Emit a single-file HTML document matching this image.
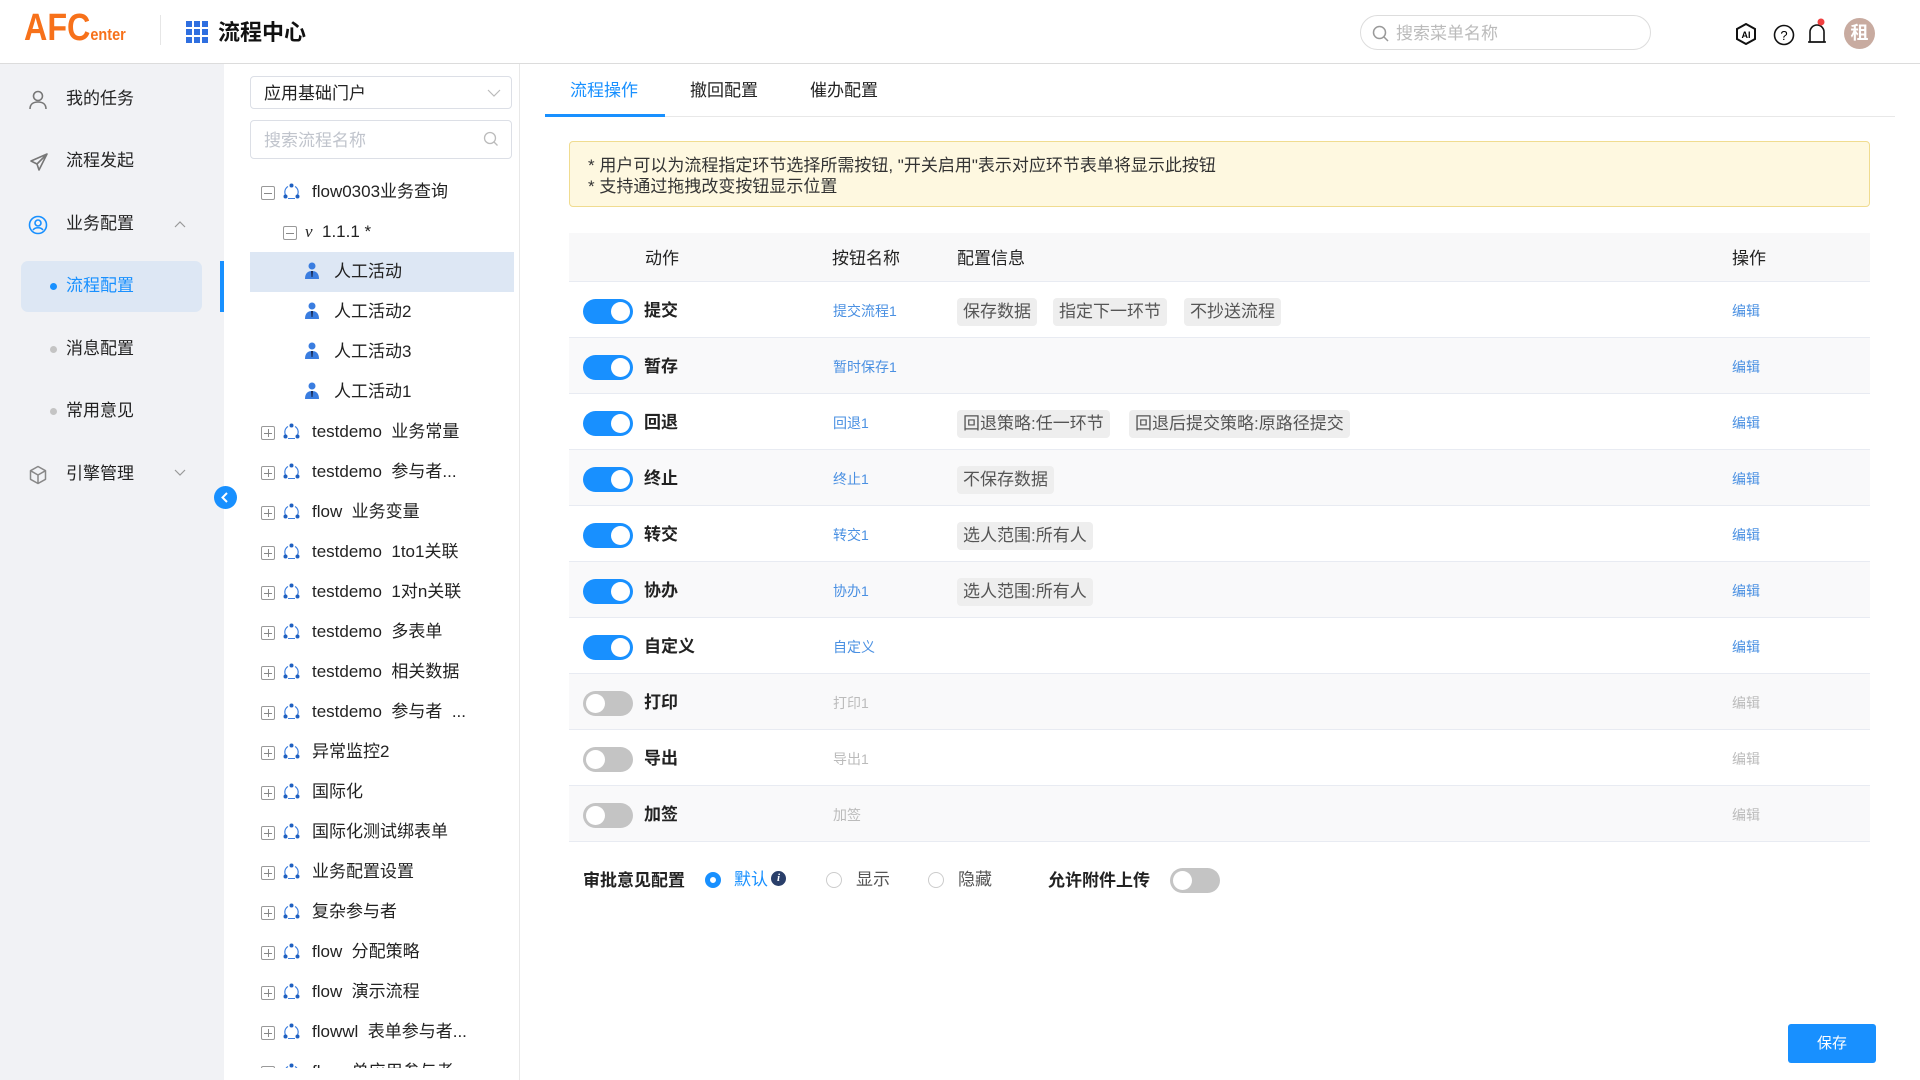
<!DOCTYPE html>
<html><head><meta charset="utf-8"><style>
*{margin:0;padding:0;box-sizing:border-box}
body{width:1920px;height:1080px;overflow:hidden;background:#fff;font-family:"Liberation Sans","Noto Sans CJK SC",sans-serif;color:#222;position:relative}
.a{position:absolute}
.hdr{left:0;top:0;width:1920px;height:64px;border-bottom:1px solid #dcdcdc;background:#fff}
.side{left:0;top:64px;width:224px;height:1016px;background:#f1f2f5}
.tree{left:224px;top:64px;width:296px;height:1016px;border-right:1px solid #e8e8e8;background:#fff}
.mi{position:absolute;left:66px;font-size:17px;color:#222;line-height:24px}
.ti{position:absolute;font-size:17px;line-height:24px;white-space:nowrap;color:#222}
.box{position:absolute;width:14px;height:14px;border:1px solid #999;border-radius:2px}
.box:before{content:"";position:absolute;left:2px;right:2px;top:5.5px;height:1px;background:#888}
.box.p:after{content:"";position:absolute;top:2px;bottom:2px;left:5.5px;width:1px;background:#888}
.row{position:absolute;left:569px;width:1301px;height:56px;border-bottom:1px solid #e8ebf2}
.tg{position:absolute;left:14px;top:17px;width:50px;height:25px;border-radius:13px;background:#1890ff}
.tg:after{content:"";position:absolute;right:3px;top:3px;width:19px;height:19px;border-radius:50%;background:#fff}
.tg.off{background:#c4c4c4}.tg.off:after{right:auto;left:3px}
.act{position:absolute;left:75px;top:17px;font-size:17px;font-weight:bold;line-height:24px}
.bn{position:absolute;left:264px;top:19px;font-size:14px;color:#4a90e2;line-height:20px}
.off2 .bn,.off2 .op{color:#bbb}
.op{position:absolute;left:1163px;top:19px;font-size:14px;color:#4a90e2;line-height:20px}
.tag{position:absolute;top:16px;height:28px;line-height:28px;padding:0 6px;background:#eeeeee;border-radius:4px;font-size:17px;color:#555}
</style></head><body>
<div class="a hdr">
 <div class="a" style="left:24px;top:8px;font-size:38px;font-weight:bold;color:#f7711a;line-height:40px;transform:scaleX(0.85);transform-origin:left">AFC<span style="font-size:17px">enter</span></div>
 <div class="a" style="left:160px;top:15px;width:1px;height:30px;background:#e6e6e6"></div>
 <svg class="a" style="left:186px;top:21px" width="23" height="23"><g fill="#2f6fe0"><rect x="0" y="0" width="6" height="6"/><rect x="8" y="0" width="6" height="6"/><rect x="16" y="0" width="6" height="6"/><rect x="0" y="8" width="6" height="6"/><rect x="8" y="8" width="6" height="6"/><rect x="16" y="8" width="6" height="6"/><rect x="0" y="16" width="6" height="6"/><rect x="8" y="16" width="6" height="6"/><rect x="16" y="16" width="6" height="6"/></g></svg>
 <div class="a" style="left:218px;top:19px;font-size:22px;font-weight:bold;color:#111;line-height:28px">流程中心</div>
 <div class="a" style="left:1360px;top:15px;width:291px;height:35px;border:1px solid #ddd;border-radius:18px">
  <svg class="a" style="left:11px;top:9px" width="17" height="17"><circle cx="7.5" cy="7.5" r="6" fill="none" stroke="#999" stroke-width="1.5"/><path d="M12 12l4 4" stroke="#999" stroke-width="1.5"/></svg>
  <div class="a" style="left:35px;top:6px;font-size:17px;color:#bbb;line-height:24px">搜索菜单名称</div>
 </div>
 <svg class="a" style="left:1735px;top:23px" width="22" height="22"><path d="M11 1l9 5v10l-9 5-9-5V6z" fill="none" stroke="#111" stroke-width="2"/><text x="11" y="15" font-size="9" font-weight="bold" text-anchor="middle" font-family="Liberation Sans">AI</text></svg>
 <svg class="a" style="left:1773px;top:24px" width="22" height="22"><circle cx="11" cy="11" r="9.5" fill="none" stroke="#111" stroke-width="1.6"/><text x="11" y="16" font-size="13" text-anchor="middle" font-family="Liberation Sans">?</text></svg>
 <svg class="a" style="left:1806px;top:18px" width="22" height="30"><path d="M4 24V14a7 7 0 0 1 14 0v10z" fill="none" stroke="#111" stroke-width="1.6"/><path d="M2 24h18" stroke="#111" stroke-width="1.6"/><circle cx="15" cy="4" r="3.5" fill="#f04040"/></svg>
 <div class="a" style="left:1844px;top:18px;width:31px;height:31px;border-radius:50%;background:#c8aba0;color:#fff;font-weight:bold;font-size:18px;text-align:center;line-height:31px">租</div>
</div>

<div class="a side">
 <svg class="a" style="left:29px;top:26px" width="18" height="20"><circle cx="9" cy="6" r="4.5" fill="none" stroke="#777" stroke-width="1.6"/><path d="M1 19c0-5 3.5-7 8-7s8 2 8 7" fill="none" stroke="#777" stroke-width="1.6"/></svg>
 <div class="mi" style="top:23px">我的任务</div>
 <svg class="a" style="left:29px;top:88px" width="20" height="20"><path d="M18 2L2 9l6 3 2 6 8-16z M8 12l10-10" fill="none" stroke="#777" stroke-width="1.6" stroke-linejoin="round"/></svg>
 <div class="mi" style="top:85px">流程发起</div>
 <svg class="a" style="left:28px;top:151px" width="20" height="20"><circle cx="10" cy="10" r="8.5" fill="none" stroke="#1890ff" stroke-width="1.6"/><circle cx="10" cy="8" r="3" fill="none" stroke="#1890ff" stroke-width="1.6"/><path d="M5 15c2-3 8-3 10 0" fill="none" stroke="#1890ff" stroke-width="1.6"/></svg>
 <div class="mi" style="top:148px">业务配置</div>
 <svg class="a" style="left:174px;top:156px" width="12" height="8"><path d="M1 7l5-5 5 5" fill="none" stroke="#999" stroke-width="1.2"/></svg>
 <div class="a" style="left:21px;top:197px;width:181px;height:51px;background:#dde7f4;border-radius:7px"></div>
 <div class="a" style="left:220px;top:197px;width:4px;height:51px;background:#1890ff"></div>
 <div class="a" style="left:50px;top:219px;width:7px;height:7px;border-radius:50%;background:#1890ff"></div>
 <div class="mi" style="top:210px;color:#1890ff">流程配置</div>
 <div class="a" style="left:50px;top:282px;width:7px;height:7px;border-radius:50%;background:#c4c4c4"></div>
 <div class="mi" style="top:273px">消息配置</div>
 <div class="a" style="left:50px;top:344px;width:7px;height:7px;border-radius:50%;background:#c4c4c4"></div>
 <div class="mi" style="top:335px">常用意见</div>
 <svg class="a" style="left:28px;top:401px" width="20" height="20"><path d="M10 1.5l7.5 4.2v8.6L10 18.5 2.5 14.3V5.7z M2.5 5.7L10 10l7.5-4.3 M10 10v8.5" fill="none" stroke="#888" stroke-width="1.5" stroke-linejoin="round"/></svg>
 <div class="mi" style="top:398px">引擎管理</div>
 <svg class="a" style="left:174px;top:405px" width="12" height="8"><path d="M1 1l5 5 5-5" fill="none" stroke="#999" stroke-width="1.2"/></svg>
</div>

<div class="a tree">
 <div class="a" style="left:26px;top:12px;width:262px;height:33px;border:1px solid #dcdfe6;border-radius:4px">
  <div class="a" style="left:13px;top:5px;font-size:17px;line-height:24px">应用基础门户</div>
  <svg class="a" style="left:236px;top:12px" width="14" height="8"><path d="M1 1l6 6 6-6" fill="none" stroke="#bbb" stroke-width="1.2"/></svg>
 </div>
 <div class="a" style="left:26px;top:56px;width:262px;height:39px;border:1px solid #dcdfe6;border-radius:4px">
  <div class="a" style="left:13px;top:8px;font-size:17px;color:#c0c4cc;line-height:24px">搜索流程名称</div>
  <svg class="a" style="left:232px;top:10px" width="16" height="16"><circle cx="7" cy="7" r="5.5" fill="none" stroke="#bbb" stroke-width="1.3"/><path d="M11 11l3.5 3.5" stroke="#bbb" stroke-width="1.3"/></svg>
 </div>
 <div class="a" style="left:26px;top:188px;width:264px;height:40px;background:#dde7f4"></div>
</div>
<div id="tr"></div>
<div class="a" style="left:214px;top:486px;width:23px;height:23px;border-radius:50%;background:#1890ff"><svg width="23" height="23"><path d="M13 7l-4.5 4.5L13 16" fill="none" stroke="#fff" stroke-width="2"/></svg></div>

<div class="a" style="left:545px;top:116px;width:1350px;height:1px;background:#e8e8e8"></div>
<div class="a" style="left:545px;top:114px;width:120px;height:3px;background:#1890ff"></div>
<div class="a" style="left:570px;top:79px;font-size:17px;color:#1890ff;line-height:24px">流程操作</div>
<div class="a" style="left:690px;top:79px;font-size:17px;line-height:24px">撤回配置</div>
<div class="a" style="left:810px;top:79px;font-size:17px;line-height:24px">催办配置</div>

<div class="a" style="left:569px;top:141px;width:1301px;height:66px;background:#fef8e0;border:1px solid #f0dc90;border-radius:4px;font-size:17px;line-height:21px;padding:13px 0 0 18px;color:#333">* 用户可以为流程指定环节选择所需按钮, "开关启用"表示对应环节表单将显示此按钮<br>* 支持通过拖拽改变按钮显示位置</div>

<div class="a" style="left:569px;top:233px;width:1301px;height:49px;background:#f8f8f9;border-bottom:1px solid #e8ebf2;font-size:17px;line-height:51px">
 <span class="a" style="left:76px">动作</span><span class="a" style="left:263px">按钮名称</span><span class="a" style="left:388px">配置信息</span><span class="a" style="left:1163px">操作</span>
</div>
<div id="rows"></div>

<div class="a" style="left:583px;top:869px;font-size:17px;font-weight:bold;line-height:24px">审批意见配置</div>
<div class="a" style="left:705px;top:872px;width:16px;height:16px;border-radius:50%;border:5px solid #1890ff;background:#fff"></div>
<div class="a" style="left:734px;top:868px;font-size:17px;color:#1890ff;line-height:24px">默认</div>
<div class="a" style="left:771px;top:871px;width:15px;height:15px;border-radius:50%;background:#2a3f6a;color:#fff;font-size:11px;font-style:italic;font-weight:bold;text-align:center;line-height:15px;font-family:'Liberation Serif',serif">i</div>
<div class="a" style="left:826px;top:872px;width:16px;height:16px;border-radius:50%;border:1px solid #ccc"></div>
<div class="a" style="left:856px;top:868px;font-size:17px;color:#555;line-height:24px">显示</div>
<div class="a" style="left:928px;top:872px;width:16px;height:16px;border-radius:50%;border:1px solid #ccc"></div>
<div class="a" style="left:958px;top:868px;font-size:17px;color:#555;line-height:24px">隐藏</div>
<div class="a" style="left:1048px;top:869px;font-size:17px;font-weight:bold;line-height:24px">允许附件上传</div>
<div class="a tg off" style="left:1170px;top:868px"></div>

<div class="a" style="left:1788px;top:1024px;width:88px;height:39px;background:#1890ff;border-radius:3px;color:#fff;font-size:15px;text-align:center;line-height:39px">保存</div>

<script>
var flow='<svg width="17" height="17" viewBox="0 0 17 17"><path d="M5 3.5A6.5 6.5 0 0 0 2.5 12 M14.5 12A6.5 6.5 0 0 0 12 3.5 M5 15.5h7" fill="none" stroke="#3a7de0" stroke-width="1.1"/><circle cx="8.5" cy="2.5" r="2" fill="#1e5fc0"/><circle cx="2.5" cy="13.5" r="2" fill="#1e5fc0"/><circle cx="14.5" cy="13.5" r="2" fill="#1e5fc0"/></svg>';
var person='<svg width="16" height="17" viewBox="0 0 16 17"><circle cx="8" cy="4" r="3.5" fill="#3a7de0"/><path d="M1 17c0-6 3-8 7-8s7 2 7 8z" fill="#3a7de0"/><path d="M7 9h2l-.5 6h-1z" fill="#1a2a50"/></svg>';
var items=[[0,'m',1,'flow0303业务查询'],[1,'m',0,'<i style="font-family:Liberation Serif">v</i>&nbsp; 1.1.1 *'],[2,'',2,'人工活动'],[2,'',2,'人工活动2'],[2,'',2,'人工活动3'],[2,'',2,'人工活动1'],
[0,'p',1,'testdemo&nbsp; 业务常量'],[0,'p',1,'testdemo&nbsp; 参与者...'],[0,'p',1,'flow&nbsp; 业务变量'],[0,'p',1,'testdemo&nbsp; 1to1关联'],[0,'p',1,'testdemo&nbsp; 1对n关联'],[0,'p',1,'testdemo&nbsp; 多表单'],[0,'p',1,'testdemo&nbsp; 相关数据'],[0,'p',1,'testdemo&nbsp; 参与者&nbsp; ...'],[0,'p',1,'异常监控2'],[0,'p',1,'国际化'],[0,'p',1,'国际化测试绑表单'],[0,'p',1,'业务配置设置'],[0,'p',1,'复杂参与者'],[0,'p',1,'flow&nbsp; 分配策略'],[0,'p',1,'flow&nbsp; 演示流程'],[0,'p',1,'flowwl&nbsp; 表单参与者...'],[0,'p',1,'flow&nbsp; 单应用参与者']];
var h='';items.forEach(function(it,i){var y=192+i*40;
if(it[0]==0){h+='<div class="box '+it[1]+'" style="left:261px;top:'+(y-6)+'px"></div><div class="a" style="left:283px;top:'+(y-9)+'px">'+flow+'</div><div class="ti" style="left:312px;top:'+(y-12)+'px">'+it[3]+'</div>';}
else if(it[0]==1){h+='<div class="box m" style="left:283px;top:'+(y-6)+'px"></div><div class="ti" style="left:305px;top:'+(y-12)+'px">'+it[3]+'</div>';}
else{h+='<div class="a" style="left:304px;top:'+(y-10)+'px">'+person+'</div><div class="ti" style="left:334px;top:'+(y-12)+'px">'+it[3]+'</div>';}});
document.getElementById('tr').innerHTML='<div style="position:absolute;left:0;top:0;width:520px;height:1068px;overflow:hidden">'+h+'</div>';
var rows=[[1,'提交','提交流程1',[['保存数据',388],['指定下一环节',484],['不抄送流程',615]]],[1,'暂存','暂时保存1',[]],[1,'回退','回退1',[['回退策略:任一环节',388],['回退后提交策略:原路径提交',560]]],[1,'终止','终止1',[['不保存数据',388]]],[1,'转交','转交1',[['选人范围:所有人',388]]],[1,'协办','协办1',[['选人范围:所有人',388]]],[1,'自定义','自定义',[]],[0,'打印','打印1',[]],[0,'导出','导出1',[]],[0,'加签','加签',[]]];
var r='';rows.forEach(function(x,i){var t='';x[3].forEach(function(g){t+='<div class="tag" style="left:'+g[1]+'px">'+g[0]+'</div>'});
r+='<div class="row'+(x[0]?'':' off2')+'" style="top:'+(282+i*56)+'px;background:'+(i%2?'#f9f9fa':'#fff')+'"><div class="tg'+(x[0]?'':' off')+'"></div><div class="act">'+x[1]+'</div><div class="bn">'+x[2]+'</div>'+t+'<div class="op">编辑</div></div>'});
document.getElementById('rows').innerHTML=r;
</script>
</body></html>
